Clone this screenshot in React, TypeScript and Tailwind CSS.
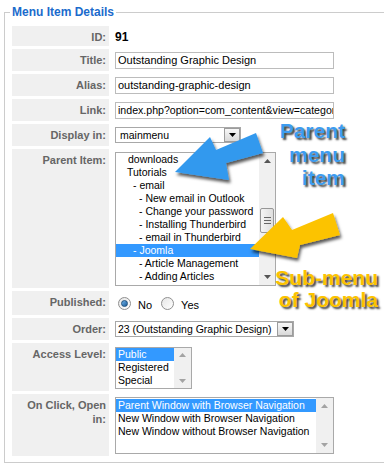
import React from "react";

function Tri({ dir, color }: { dir: "up" | "down"; color: string }) {
  return (
    <svg width="7" height="4" viewBox="0 0 7 4">
      <polygon points={dir === "up" ? "0,4 7,4 3.5,0" : "0,0 7,0 3.5,4"} fill={color} />
    </svg>
  );
}

function SelectBtn() {
  return (
    <div className="w-[16px] h-[14px] border border-[#9c9c9c] bg-gradient-to-b from-[#f7f7f7] to-[#d9d9d9] flex items-center justify-center shrink-0">
      <Tri dir="down" color="#000" />
    </div>
  );
}

function Label({ children }: { children: React.ReactNode }) {
  return (
    <div className="w-[97px] shrink-0 bg-[#f0f0f0] text-right pr-[3px] pt-[4px] text-[11px] leading-[14px] font-bold text-[#666666]">
      {children}
    </div>
  );
}

function Radio({ checked }: { checked: boolean }) {
  return (
    <div className="w-[13px] h-[13px] rounded-full border border-[#8f8f8f] bg-gradient-to-br from-[#e6e6e6] to-[#ffffff] flex items-center justify-center shrink-0">
      {checked ? (
        <div className="w-[7px] h-[7px] rounded-full bg-gradient-to-br from-[#6fb2e8] to-[#1a5e9c] border border-[#1d4f7c]" />
      ) : null}
    </div>
  );
}

export default function App() {
  const parentItems: { t: string; pl: string; sel?: boolean }[] = [
    { t: "downloads", pl: "pl-[12px]" },
    { t: "Tutorials", pl: "pl-[11px]" },
    { t: "- email", pl: "pl-[17px]" },
    { t: "- New email in Outlook", pl: "pl-[23px]" },
    { t: "- Change your password", pl: "pl-[23px]" },
    { t: "- Installing Thunderbird", pl: "pl-[23px]" },
    { t: "- email in Thunderbird", pl: "pl-[23px]" },
    { t: "- Joomla", pl: "pl-[17px]", sel: true },
    { t: "- Article Management", pl: "pl-[23px]" },
    { t: "- Adding Articles", pl: "pl-[23px]" },
  ];

  return (
    <div className="relative w-[384px] h-[468px] overflow-hidden bg-white font-['Liberation_Sans',Arial,sans-serif] text-black">
      <fieldset className="ml-[4px] mt-[5px] w-[400px] border border-[#cccccc] px-[7px] pt-[7px] pb-[6px]">
        <legend className="-ml-[2px] px-[2px] text-[12px] leading-[14px] font-bold text-[#1b6bcc]">
          Menu Item Details
        </legend>
        <div className="flex flex-col gap-[3px]">
          {/* ID */}
          <div className="flex h-[20px]">
            <Label>ID:</Label>
            <div className="pl-[6px] pt-[4px] text-[12px] leading-[14px] font-bold">91</div>
          </div>
          {/* Title */}
          <div className="flex h-[22px]">
            <Label>Title:</Label>
            <div className="pl-[6px]">
              <div className="mt-[3px] h-[17px] w-[219px] border border-[#bcbcbc] px-[2px] text-[11px] leading-[15px] whitespace-nowrap overflow-hidden">
                Outstanding Graphic Design
              </div>
            </div>
          </div>
          {/* Alias */}
          <div className="flex h-[22px]">
            <Label>Alias:</Label>
            <div className="pl-[6px]">
              <div className="mt-[3px] h-[17px] w-[219px] border border-[#bcbcbc] px-[2px] text-[11px] leading-[15px] whitespace-nowrap overflow-hidden">
                outstanding-graphic-design
              </div>
            </div>
          </div>
          {/* Link */}
          <div className="flex h-[22px]">
            <Label>Link:</Label>
            <div className="pl-[6px]">
              <div className="mt-[3px] h-[17px] w-[219px] border border-[#bcbcbc] px-[2px] text-[10.6px] leading-[15px] whitespace-nowrap overflow-hidden">
                index.php?option=com_content&amp;view=category&amp;layout=blog
              </div>
            </div>
          </div>
          {/* Display in */}
          <div className="flex h-[22px]">
            <Label>Display in:</Label>
            <div className="pl-[6px]">
              <div className="mt-[3px] h-[16px] w-[126px] border border-[#a8a8a8] flex items-center">
                <div className="flex-1 pl-[4px] text-[10.5px] leading-[14px]">mainmenu</div>
                <SelectBtn />
              </div>
            </div>
          </div>
          {/* Parent Item */}
          <div className="flex h-[139px]">
            <Label>Parent Item:</Label>
            <div className="pl-[6px]">
              <div className="mt-[3px] h-[134px] w-[161px] border border-[#a9a9a9] flex">
                <div className="flex-1 overflow-hidden">
                  {parentItems.map((it, i) => (
                    <div
                      key={i}
                      className={
                        "h-[13px] text-[10.5px] leading-[13px] whitespace-nowrap " +
                        it.pl +
                        (it.sel ? " bg-[#3399ff] text-white" : "")
                      }
                    >
                      {it.t}
                    </div>
                  ))}
                </div>
                <div className="w-[16px] bg-[#f0f0f0] flex flex-col">
                  <div className="h-[16px] flex items-center justify-center">
                    <Tri dir="up" color="#555" />
                  </div>
                  <div className="h-[39px]" />
                  <div className="h-[25px] mx-[1px] border border-[#979797] rounded-[2px] bg-gradient-to-r from-[#f5f5f5] to-[#dedede] flex flex-col items-center justify-center gap-[2px]">
                    <div className="w-[7px] h-[1px] bg-[#666]" />
                    <div className="w-[7px] h-[1px] bg-[#666]" />
                    <div className="w-[7px] h-[1px] bg-[#666]" />
                  </div>
                  <div className="flex-1" />
                  <div className="h-[16px] flex items-center justify-center">
                    <Tri dir="down" color="#555" />
                  </div>
                </div>
              </div>
            </div>
          </div>
          {/* Published */}
          <div className="flex h-[24px]">
            <Label>Published:</Label>
            <div className="pl-[6px] flex items-center text-[11px] leading-[14px]">
              <div className="ml-[3px]">
                <Radio checked />
              </div>
              <span className="ml-[7px] pt-[3px]">No</span>
              <div className="ml-[9px]">
                <Radio checked={false} />
              </div>
              <span className="ml-[7px] pt-[3px]">Yes</span>
            </div>
          </div>
          {/* Order */}
          <div className="flex h-[22px]">
            <Label>Order:</Label>
            <div className="pl-[6px]">
              <div className="mt-[3px] h-[16px] w-[179px] border border-[#a8a8a8] flex items-center">
                <div className="flex-1 pl-[2px] text-[10.5px] leading-[14px] whitespace-nowrap overflow-hidden">
                  23 (Outstanding Graphic Design)
                </div>
                <SelectBtn />
              </div>
            </div>
          </div>
          {/* Access Level */}
          <div className="flex h-[48px]">
            <Label>Access Level:</Label>
            <div className="pl-[6px]">
              <div className="mt-[4px] h-[42px] w-[77px] border border-[#a9a9a9] flex">
                <div className="flex-1 overflow-hidden text-[10.5px] leading-[13px]">
                  <div className="h-[13px] pl-[2px] bg-[#3399ff] text-white">Public</div>
                  <div className="h-[13px] pl-[2px]">Registered</div>
                  <div className="h-[13px] pl-[2px]">Special</div>
                </div>
                <div className="w-[17px] bg-[#f0f0f0] flex flex-col justify-between">
                  <div className="h-[14px] flex items-center justify-center">
                    <Tri dir="up" color="#a3a3a3" />
                  </div>
                  <div className="h-[14px] flex items-center justify-center">
                    <Tri dir="down" color="#a3a3a3" />
                  </div>
                </div>
              </div>
            </div>
          </div>
          {/* On Click */}
          <div className="flex h-[62px]">
            <Label>
              On Click, Open
              <br />
              in:
            </Label>
            <div className="pl-[6px]">
              <div className="mt-[3px] h-[57px] w-[219px] border border-[#a9a9a9] flex">
                <div className="flex-1 overflow-hidden pt-[1px] text-[10.5px] leading-[13px] whitespace-nowrap">
                  <div className="h-[13px] pl-[2px] bg-[#3399ff] text-white">Parent Window with Browser Navigation</div>
                  <div className="h-[13px] pl-[2px]">New Window with Browser Navigation</div>
                  <div className="h-[13px] pl-[2px]">New Window without Browser Navigation</div>
                </div>
                <div className="w-[17px] bg-[#f0f0f0] flex flex-col justify-between">
                  <div className="h-[16px] flex items-center justify-center">
                    <Tri dir="up" color="#a3a3a3" />
                  </div>
                  <div className="h-[16px] flex items-center justify-center">
                    <Tri dir="down" color="#a3a3a3" />
                  </div>
                </div>
              </div>
            </div>
          </div>
        </div>
      </fieldset>

      {/* Annotation arrows */}
      <svg className="absolute left-0 top-0 pointer-events-none" width="384" height="468" viewBox="0 0 384 468">
        <defs>
          <filter id="sh" x="-20%" y="-20%" width="140%" height="160%">
            <feDropShadow dx="1.5" dy="3" stdDeviation="1.6" floodColor="#000" floodOpacity="0.65" />
          </filter>
        </defs>
        <polygon
          points="175,172 210,137 216,150 256,133 263,153 226,163 229,180"
          fill="#3399ee"
          filter="url(#sh)"
        />
        <polygon
          points="250,249 283,217 292,230 333,213 340,235 300,245 297,258"
          fill="#fcc300"
          filter="url(#sh)"
        />
      </svg>

      <div className="absolute right-[39px] top-[119px] text-right text-[21px] leading-[23.5px] font-bold text-[#3d9cf0] [text-shadow:2px_2px_2px_rgba(0,0,0,0.75)] pointer-events-none">
        Parent
        <br />
        menu
        <br />
        item
      </div>
      <div className="absolute right-[6px] top-[267px] text-right text-[21px] leading-[22px] font-bold text-[#fcc300] [text-shadow:2px_2px_2px_rgba(0,0,0,0.75)] pointer-events-none whitespace-nowrap">
        Sub-menu
        <br />
        of Joomla
      </div>
    </div>
  );
}
